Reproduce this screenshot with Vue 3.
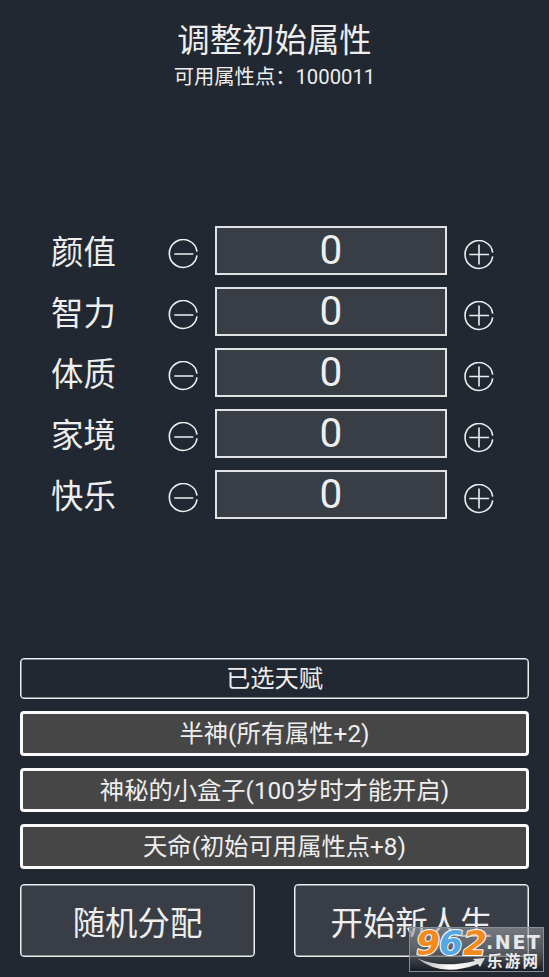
<script setup>
import { ref } from 'vue'

const points = ref(1000011)
const attributes = ref([
  { name: '颜值', value: 0 },
  { name: '智力', value: 0 },
  { name: '体质', value: 0 },
  { name: '家境', value: 0 },
  { name: '快乐', value: 0 },
])
const talents = ['半神(所有属性+2)', '神秘的小盒子(100岁时才能开启)', '天命(初始可用属性点+8)']

function change(item, delta) {
  if (item.value + delta < 0 || points.value - delta < 0) return
  item.value += delta
  points.value -= delta
}
</script>

<template>
  <main class="screen">
    <header class="header">
      <h1 class="title">调整初始属性</h1>
      <p class="points">可用属性点：{{ points }}</p>
    </header>

    <section class="attributes">
      <div v-for="item in attributes" :key="item.name" class="row">
        <span class="label">{{ item.name }}</span>
        <button class="step" @click="change(item, -1)">
          <svg viewBox="0 0 30 30" width="30" height="30">
            <path d="M29 12.6A13.9 13.9 0 1 0 29 16.4M6.3 15H25.3" />
          </svg>
        </button>
        <div class="value">{{ item.value }}</div>
        <button class="step plus" @click="change(item, 1)">
          <svg viewBox="0 0 30 30" width="30" height="30">
            <path d="M28.7 12.6A13.9 13.9 0 1 0 28.7 16.4M5.3 14.5H25M15 4.5V24.5" />
          </svg>
        </button>
      </div>
    </section>

    <section class="talents">
      <div class="talent-head">已选天赋</div>
      <div v-for="t in talents" :key="t" class="talent">{{ t }}</div>
    </section>

    <footer class="actions">
      <button class="action">随机分配</button>
      <button class="action">开始新人生</button>
    </footer>

    <svg class="watermark" viewBox="0 0 135 45" width="135" height="45">
      <defs>
        <linearGradient id="shade" x1="0" y1="0" x2="0" y2="1">
          <stop offset="0" stop-color="#9da1a6" stop-opacity=".6" />
          <stop offset=".5" stop-color="#73777c" stop-opacity=".6" />
          <stop offset="1" stop-color="#14171c" stop-opacity=".75" />
        </linearGradient>
        <linearGradient id="swoosh" x1="0" y1="0" x2="1" y2="0">
          <stop offset="0" stop-color="#aaa" />
          <stop offset=".5" stop-color="#fff" />
          <stop offset="1" stop-color="#d8d8d8" />
        </linearGradient>
      </defs>
      <rect x=".5" y=".5" width="134" height="44" fill="url(#shade)" stroke="#8b8f95" />
      <path d="M8 31Q31 42 66 34L64 32L76 31L71 40L69 37Q32 51 8 31Z" fill="url(#swoosh)" />
      <g class="digits">
        <text x="7" y="28" textLength="24" lengthAdjust="spacingAndGlyphs" fill="#f58a1c">9</text>
        <text x="30" y="28" textLength="24" lengthAdjust="spacingAndGlyphs" fill="#55a8e2">6</text>
        <text x="54" y="28" textLength="24" lengthAdjust="spacingAndGlyphs" fill="#f58a1c">2</text>
      </g>
      <text class="net" x="77" y="22" textLength="54" lengthAdjust="spacing">.NET</text>
      <text class="site" x="78" y="40" textLength="51">乐游网</text>
    </svg>
  </main>
</template>

<style>
body {
  margin: 0;
  background: #222831;
}
</style>

<style scoped>
.screen {
  position: relative;
  box-sizing: border-box;
  height: 977px;
  padding: 20px 20px;
  display: flex;
  flex-direction: column;
  overflow: hidden;
  background: #222831;
  color: #eee;
  font-family: Roboto, "Noto Sans CJK SC", sans-serif;
}
button {
  padding: 0;
  color: inherit;
  font-family: inherit;
}
.header {
  height: 206px;
  text-align: center;
}
.title {
  margin: 0;
  font-size: 32.4px;
  font-weight: 400;
  line-height: 42px;
}
.points {
  margin: 2px 0 0;
  font-size: 20.3px;
  line-height: 26px;
}
.attributes {
  display: flex;
  flex-direction: column;
  gap: 12px;
  height: 432px;
}
.row {
  display: flex;
  align-items: center;
  height: 49px;
  padding-left: 31px;
}
.label {
  width: 117px;
  padding-top: 6px;
  font-size: 32.4px;
  line-height: 49px;
}
.step {
  display: flex;
  width: 30px;
  height: 30px;
  margin-top: 6px;
  border: 0;
  background: none;
}
.step path {
  fill: none;
  stroke: #eee;
  stroke-width: 1.6;
}
.value {
  box-sizing: border-box;
  width: 232px;
  height: 49px;
  margin: 0 17px;
  border: 2px solid #e1e2e4;
  background: #393e46;
  font-size: 40.5px;
  line-height: 45px;
  text-align: center;
}
.plus {
  margin-top: 8px;
}
.talents {
  display: flex;
  flex-direction: column;
  gap: 12px;
  height: 226px;
}
.talent-head,
.talent {
  box-sizing: border-box;
  border-radius: 4px;
  font-size: 24.3px;
  text-align: center;
}
.talent-head {
  height: 41px;
  border: 1px solid #eee;
  box-shadow: inset 0 0 0 0.5px #eee;
  line-height: 40px;
}
.talent {
  height: 44.5px;
  border: 3px solid #fafafa;
  background: #464646;
  line-height: 40px;
}
.actions {
  display: flex;
  justify-content: space-between;
}
.action {
  box-sizing: border-box;
  width: 235px;
  height: 73px;
  border: 1px solid #eee;
  border-radius: 4px;
  box-shadow: inset 0 0 0 0.5px #eee;
  background: #393e46;
  font-size: 32.4px;
}
.watermark {
  position: absolute;
  left: 409px;
  top: 927px;
}
.digits {
  font: italic 700 33px "DejaVu Sans", sans-serif;
  stroke: #fff;
  stroke-width: 2px;
  stroke-linejoin: round;
  paint-order: stroke;
}
.net {
  fill: #e8e8e8;
  font: 700 19px "DejaVu Sans", sans-serif;
}
.site {
  fill: #eee;
  font: 700 15.5px "Noto Sans CJK SC", sans-serif;
}
</style>
